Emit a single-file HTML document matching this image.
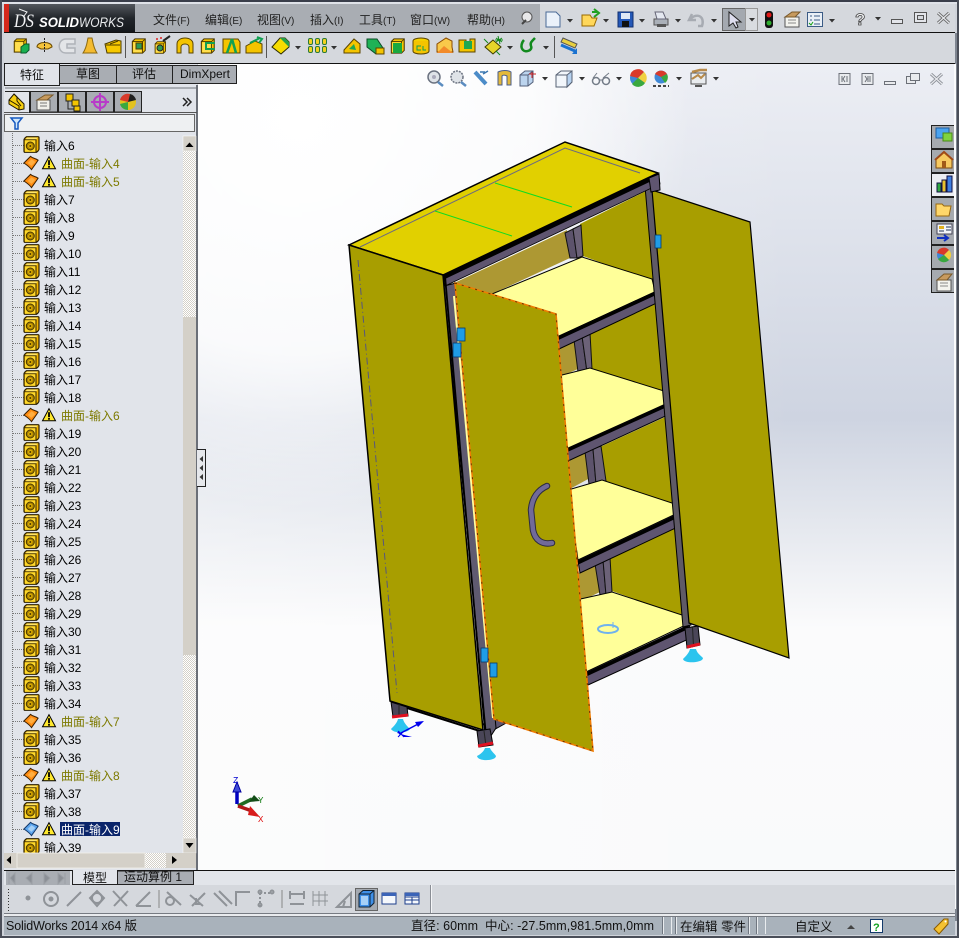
<!DOCTYPE html>
<html><head><meta charset="utf-8"><title>SolidWorks</title>
<style>
html,body{margin:0;padding:0;background:#cfd3da;width:959px;height:938px;overflow:hidden}
svg{display:block;position:absolute;left:0;top:0}
#vpbg{position:absolute;left:198px;top:64px;width:757px;height:806px;background:radial-gradient(circle 390px at 102px 56px,#fff 0,rgba(255,255,255,.8) 60%,rgba(255,255,255,0) 100%),linear-gradient(90deg,rgba(255,255,255,.38),rgba(255,255,255,0) 602px),linear-gradient(180deg,#eceef4 0,#dfe3ec 20%,#ced4e1 44%,#e6e9ef 58%,#fbfbfc 70%,#f9fafb 100%)}
text{font-family:"Liberation Sans","Noto Sans CJK SC",sans-serif}
.t{font-size:12px;fill:#000}
.s{font-size:12px;fill:#7d7a00}
.m{font-size:12px;fill:#222}
.st{font-size:12.5px;fill:#111}
</style></head><body>
<div id="vpbg"></div>
<svg width="959" height="938" viewBox="0 0 959 938" xmlns="http://www.w3.org/2000/svg">
<defs>
<linearGradient id="logo2" x1="0" y1="0" x2="0" y2="1"><stop offset="0" stop-color="#53575d"/><stop offset=".5" stop-color="#22262b"/><stop offset="1" stop-color="#14171b"/></linearGradient>
<pattern id="chk" width="2" height="2" patternUnits="userSpaceOnUse"><rect width="2" height="2" fill="#fff"/><rect width="1" height="1" fill="#d4d0c8"/><rect x="1" y="1" width="1" height="1" fill="#d4d0c8"/></pattern>
<symbol id="imp" viewBox="0 0 17 17" overflow="visible">
<path d="M1 4 Q1 3 2 2 L3.500 .7 H15 Q16 .7 16 1.700 V13 Q16 14 15 15 L13.500 16.300 H2 Q1 16.300 1 15.300Z" fill="#f2b400" stroke="#2b2000" stroke-width="1.200"/>
<path d="M1.500 3.700 H13 V16" fill="none" stroke="#2b2000"/>
<rect x="2" y="4.300" width="10.500" height="11.500" fill="#ffd82a"/>
<path d="M4 1.500 H15 L13.300 3.200 H2.500Z" fill="#ffe56a"/>
<circle cx="7.300" cy="10" r="4" fill="#a88000" stroke="#4a3800"/>
<circle cx="7.300" cy="10" r="2.200" fill="#e0b000"/>
<circle cx="7.300" cy="10" r="1" fill="#4a3800"/>
</symbol>
<symbol id="surf" viewBox="0 0 18 16" overflow="visible">
<path d="M1 8 L8 1 C10 3 13 3 16 5 L14 8 L9 15 C7 12 4 10 1 8Z" fill="#ff8c10" stroke="#3b2000" stroke-width="1.100"/><path d="M5 8 L9 4 C11 5 12 6 13 7 L9 11Z" fill="#ffae40"/>
</symbol>
<symbol id="surfb" viewBox="0 0 18 16" overflow="visible">
<path d="M1 8 L8 1 C10 3 13 3 16 5 L14 8 L9 15 C7 12 4 10 1 8Z" fill="#5ea6ee" stroke="#14396a" stroke-width="1.100"/><path d="M5 8 L9 4 C11 5 12 6 13 7 L9 11Z" fill="#a5d0f7"/>
</symbol>
<symbol id="warn" viewBox="0 0 14 14" overflow="visible">
<path d="M7 .7 L13.500 12.800 H.5Z" fill="#ffe92e" stroke="#000"/><rect x="6.100" y="4.200" width="1.800" height="5" fill="#000"/><rect x="6.100" y="10" width="1.800" height="1.700" fill="#000"/>
</symbol>
<symbol id="box" viewBox="0 0 18 18" overflow="visible">
<path d="M1.500 4 L4.500 1 H16 V14 L13 17 H1.500Z" fill="#f7c600" stroke="#4d3a00" stroke-width="1.200"/><path d="M1.500 4 H13 V17 M13 4 L16 1" fill="none" stroke="#4d3a00"/><rect x="2.500" y="5" width="9.500" height="11" fill="#ffdf50"/>
</symbol>
<symbol id="arr" viewBox="0 0 6 4" overflow="visible"><path d="M0 0 H6 L3 3.500Z" fill="#333"/></symbol>
<symbol id="tab" viewBox="0 0 24 24" overflow="visible"><path d="M24 .5 H.5 V23.500 H24" fill="#a6aaaf" stroke="#222"/></symbol>
</defs>

<!-- window frame -->
<rect x="0" y="0" width="959" height="2" fill="#3a3e4a"/>
<rect x="0" y="0" width="2" height="938" fill="#4a4e58"/>
<rect x="957" y="0" width="2" height="938" fill="#4a4e58"/>
<rect x="0" y="936" width="959" height="2" fill="#4a4e58"/>
<rect x="2" y="2" width="955" height="2" fill="#dfe2e8"/>

<!-- title row -->
<rect x="4" y="4" width="536" height="28" fill="#a9adb3"/>
<rect x="540" y="4" width="415" height="28" fill="#d5d8dd"/>
<rect x="4" y="4" width="5" height="28" fill="#d5281c"/>
<rect x="9" y="4" width="126" height="28" fill="url(#logo2)"/>
<text x="14" y="27" style="font-family:'Liberation Serif',serif;font-style:italic;font-size:19px" fill="#f2f3f5" textLength="20" lengthAdjust="spacingAndGlyphs">DS</text>
<path d="M19 9 L27 12 L24 16" fill="none" stroke="#f2f3f5" stroke-width="1"/>
<text x="39" y="27" style="font-size:14px;font-weight:bold;font-style:italic" fill="#fff" textLength="40" lengthAdjust="spacingAndGlyphs">SOLID</text>
<text x="79" y="27" style="font-size:14px;font-style:italic" fill="#e8eaec" textLength="45" lengthAdjust="spacingAndGlyphs">WORKS</text>
<rect x="4" y="32" width="951" height="1" fill="#111"/>

<text class="m" x="153" y="24">文件<tspan font-size="10">(F)</tspan></text>
<text class="m" x="205" y="24">编辑<tspan font-size="10">(E)</tspan></text>
<text class="m" x="257" y="24">视图<tspan font-size="10">(V)</tspan></text>
<text class="m" x="310" y="24">插入<tspan font-size="10">(I)</tspan></text>
<text class="m" x="359" y="24">工具<tspan font-size="10">(T)</tspan></text>
<text class="m" x="410" y="24">窗口<tspan font-size="10">(W)</tspan></text>
<text class="m" x="467" y="24">帮助<tspan font-size="10">(H)</tspan></text>
<circle cx="527" cy="17" r="5" fill="#e8e8ea" stroke="#555"/><path d="M522 24 L526 20" stroke="#444" stroke-width="2"/>

<!-- top standard icons -->
<path d="M546 12 H556 L560 16 V27 H546Z" fill="#eaf1fa" stroke="#4a6a96"/>
<use href="#arr" x="567" y="19" width="6" height="4"/>
<path d="M582 15 H590 L592 18 H597 L594 26 H582Z" fill="#ffd75a" stroke="#9a6a00"/><path d="M592 12 H597 M594 9 L599 13 L594 17" fill="none" stroke="#20a020" stroke-width="2"/>
<use href="#arr" x="603" y="19" width="6" height="4"/>
<rect x="618" y="12" width="15" height="15" fill="#2458b8" stroke="#122f70"/><rect x="621" y="13" width="9" height="6" fill="#dfe8f5"/><rect x="622" y="21" width="7" height="6" fill="#111"/>
<use href="#arr" x="639" y="19" width="6" height="4"/>
<path d="M654 19 H668 V25 H654Z" fill="#aab0b8" stroke="#555"/><path d="M657 19 L655 12 H663 L666 19Z" fill="#e4e8f0" stroke="#667"/><rect x="657" y="24" width="9" height="3" fill="#555"/>
<use href="#arr" x="675" y="19" width="6" height="4"/>
<path d="M692 14 L689 20 L696 20 M690 19 C698 12 705 17 702 26 L698 26" fill="none" stroke="#a7abb2" stroke-width="2.500"/>
<use href="#arr" x="711" y="19" width="6" height="4"/>
<rect x="722.500" y="8.500" width="23" height="22" fill="#a4a9b0" stroke="#666"/>
<rect x="745.500" y="8.500" width="12" height="22" fill="#d9dce0" stroke="#999"/>
<path d="M729 12 L729 26 L733 23 L736 28 L738 27 L736 22 L741 22Z" fill="#dde" stroke="#222"/>
<use href="#arr" x="749" y="18" width="6" height="4"/>
<rect x="765" y="11" width="8" height="17" rx="3" fill="#111"/><circle cx="769" cy="15" r="2.500" fill="#e21818"/><circle cx="769" cy="23" r="2.500" fill="#2fae2f"/>
<path d="M785 17 H799 V27 H785Z" fill="#f3f3ee" stroke="#555"/><path d="M785 17 L792 12 H800 L795 17Z" fill="#c79a5e" stroke="#7a5a2b"/><path d="M788 20 H796 M788 23 H796" stroke="#888"/>
<rect x="807.500" y="12.500" width="15" height="14" fill="#e9eff6" stroke="#3b5b85"/><path d="M810 16 H812 M814 16 H820 M814 20 H820 M814 24 H820 M810 20 H812" stroke="#3b5b85"/><path d="M809 23 L811 25 L813 22" stroke="#11a011" fill="none"/>
<use href="#arr" x="829" y="19" width="6" height="4"/>
<text x="855" y="25" style="font-size:17px;font-weight:bold" fill="#f2f3f5" stroke="#444" stroke-width=".8">?</text>
<use href="#arr" x="875" y="17" width="6" height="4"/>
<rect x="891.500" y="19.500" width="11" height="4" fill="#e3e5ea" stroke="#555"/>
<rect x="914.500" y="12.500" width="12" height="10" fill="#e3e5ea" stroke="#555"/><rect x="917.500" y="15.500" width="6" height="4" fill="#d5d8dd" stroke="#555"/>
<path d="M938 13 L949 23 M949 13 L938 23" stroke="#666" stroke-width="3"/><path d="M938 13 L949 23 M949 13 L938 23" stroke="#e4e6ea" stroke-width="1.200"/>

<!-- toolbar row -->
<rect x="4" y="33" width="951" height="30" fill="#d5d8dd"/>
<rect x="4" y="63" width="951" height="1" fill="#111"/>
<use href="#box" x="13" y="38" width="15" height="15"/><path d="M21 47 L25 44 H29 V50 L26 53 H21Z" fill="#18b050" stroke="#0b5a2c"/>
<path d="M37 47 C37 41 52 41 52 47 L48 49 H41Z" fill="#f4c33c" stroke="#6a4a00"/><path d="M44.500 38 V53" stroke="#222" stroke-dasharray="2 1"/>
<path d="M75 39 H66 C57 39 57 53 66 53 H75 V48 H67 V44 H75Z" fill="#e3e5e8" stroke="#aeb2b8" stroke-width="1.500"/>
<path d="M83 53 C87 47 87 42 88 38 H92 C93 42 93 47 97 53Z" fill="#f4bb30" stroke="#8d6a10"/>
<path d="M105 44 L116 40 L121 41 V53 H107Z" fill="#f6c800" stroke="#4d3c00"/><path d="M106 45 H120 M110 44 L118 41" stroke="#4d3c00"/>
<rect x="125" y="36" width="1" height="22" fill="#555"/>
<use href="#box" x="131" y="38" width="16" height="16"/><rect x="136" y="43" width="6" height="6" fill="#2c9a55" stroke="#4d3c00"/>
<use href="#box" x="154" y="41" width="13" height="13"/><circle cx="160" cy="48" r="3" fill="#2c9a55" stroke="#222"/><path d="M163 41 L170 36" stroke="#222" stroke-width="2"/><circle cx="157" cy="39" r="1" fill="#d22"/><circle cx="161" cy="38" r="1" fill="#d22"/>
<path d="M177 53 V44 C177 36 193 36 193 44 V53 H189 V47 C189 43 181 43 181 47 V53Z" fill="#f4c400" stroke="#5a4500"/>
<use href="#box" x="200" y="38" width="16" height="16"/><path d="M215 43 H206 V49 H215" fill="none" stroke="#11a051" stroke-width="2"/>
<path d="M223 39 H238 L240 42 V53 H223Z" fill="#f4c400" stroke="#5a4500"/><path d="M232 39 L227 53 M232 39 L236 53" stroke="#11a051" stroke-width="2.500"/>
<path d="M246 46 L255 41 L262 44 V53 H246Z" fill="#f4c400" stroke="#5a4500"/><path d="M250 43 L260 38 M257 37 L262 39 L259 43" fill="none" stroke="#11a051" stroke-width="2"/>
<rect x="266" y="36" width="1" height="22" fill="#555"/>
<path d="M272 47 L280 38 H285 L289 42 V47 L281 54Z" fill="#f5dc00" stroke="#2a2a00"/><path d="M280 38 L289 47 V42 L285 38Z" fill="#27a049"/>
<use href="#arr" x="295" y="46" width="6" height="4"/>
<g fill="#f3d21e" stroke="#2b7a36"><rect x="308.500" y="38.500" width="4" height="6" rx="1.500"/><rect x="315.500" y="38.500" width="4" height="6" rx="1.500"/><rect x="322.500" y="38.500" width="4" height="6" rx="1.500"/><rect x="308.500" y="46.500" width="4" height="6" rx="1.500"/><rect x="315.500" y="46.500" width="4" height="6" rx="1.500"/><rect x="322.500" y="46.500" width="4" height="6" rx="1.500"/></g>
<use href="#arr" x="331" y="46" width="6" height="4"/>
<path d="M344 50 L354 39 L360 44 V53 H344Z" fill="#f4c400" stroke="#5a4500"/><path d="M349 49 L354 44 L356 50Z" fill="#1fa851"/>
<path d="M367 39 H377 L383 48 V54 H376 L367 47Z" fill="#1fb256" stroke="#0c4d26"/><rect x="376" y="48" width="8" height="6" fill="#f4c400" stroke="#5a4500"/>
<use href="#box" x="390" y="38" width="16" height="16"/><rect x="393" y="43" width="9" height="10" fill="#19a83f"/>
<ellipse cx="421" cy="41" rx="8" ry="3" fill="#f4d000" stroke="#5a4500"/><path d="M413 41 V51 C413 55 429 55 429 51 V41" fill="#f4c400" stroke="#5a4500"/><path d="M421 46 H417 V50 H421 M423 46 V50 H426" stroke="#11a051" fill="none"/>
<path d="M437 44 L446 38 L452 41 V47 L453 52 H437Z" fill="#f9c94a" stroke="#8a4a00"/><path d="M437 53 L444 46 L453 53Z" fill="#f28a2a"/>
<path d="M459 52 V40 H466 V46 H470 V39 H475 V52Z" fill="#f4c400" stroke="#5a4500"/><rect x="464" y="41" width="8" height="8" fill="#1fa851"/>
<path d="M485 47 L493 40 L501 47 L493 54Z" fill="#e5d42a" stroke="#3b3b00"/><path d="M498 36 L500 44 M495 40 H503 M496 38 L502 42 M502 38 L496 42 M484 39 L488 43 M496 51 L500 55" stroke="#11881a"/>
<use href="#arr" x="507" y="46" width="6" height="4"/>
<path d="M535 38 C531 42 530 43 531 46 C533 50 526 53 523 50 C520 47 522 42 524 40" fill="none" stroke="#128a1e" stroke-width="2.500"/>
<use href="#arr" x="543" y="46" width="6" height="4"/>
<rect x="554" y="36" width="1" height="22" fill="#555"/>
<path d="M563 38 L577 44 L575 48 L561 42Z" fill="#e8d040" stroke="#555"/><path d="M561 45 L575 51" stroke="#1a72d0" stroke-width="3"/><path d="M572 54 L577 48 V54Z" fill="#1a72d0"/>

<!-- view toolbar -->
<g fill="none">
<circle cx="434" cy="77" r="6" fill="#dfe3e8" stroke="#6b7280" stroke-width="1.500"/><circle cx="434" cy="77" r="2" fill="#aab"/><path d="M438 82 L443 86" stroke="#5b8cc0" stroke-width="2.500"/>
<circle cx="457" cy="77" r="6" fill="#dfe3e8" stroke="#6b7280" stroke-width="1.500" stroke-dasharray="2 1"/><path d="M461 82 L466 86" stroke="#5b8cc0" stroke-width="2.500"/>
<path d="M475 72 L486 84" stroke="#4c8cc8" stroke-width="4"/><path d="M483 74 L488 71 M485 72 H480" stroke="#3a76b0" stroke-width="1.500"/>
<path d="M498 72 C502 70 508 70 511 72 V85 L507 85 V76 C505 75 503 75 502 76 V85 H498Z" fill="#e4b93a" stroke="#4a5d8a"/>
<path d="M520 75 L525 71 H533 V82 L528 86 H520Z" fill="#bcd4ee" stroke="#54607a"/><path d="M520 75 H528 V86 M528 75 L533 71" stroke="#54607a"/><path d="M529 74 H536 M532 78 V72" stroke="#c22"/>
<path d="M556 75 L561 71 H572 V82 L567 87 H556Z" fill="#f2f6fb" stroke="#586274"/><path d="M567 75 V87 M567 75 L572 71 V82 L567 87Z" fill="#b7d2f0" stroke="#586274"/><path d="M556 75 H567" stroke="#586274"/>
<circle cx="596" cy="81" r="3.500" stroke="#737b87" stroke-width="1.500"/><circle cx="606" cy="81" r="3.500" stroke="#737b87" stroke-width="1.500"/><path d="M599 80 H603 M593 78 L597 73 M603 78 L609 73" stroke="#737b87"/>
</g>
<use href="#arr" x="542" y="77" width="6" height="4"/>
<use href="#arr" x="579" y="77" width="6" height="4"/>
<use href="#arr" x="616" y="77" width="6" height="4"/>
<circle cx="638" cy="78" r="8" fill="#3f88d6"/><path d="M638 78 L630 76 A8 8 0 0 1 644 72Z" fill="#d83a2a"/><path d="M638 78 L644 72 A8 8 0 0 1 645 83Z" fill="#f0d040"/><path d="M638 78 L645 83 A8 8 0 0 1 632 84Z" fill="#39a83f"/>
<circle cx="661" cy="77" r="6.500" fill="#3f88d6"/><path d="M661 77 L655 74 A7 7 0 0 1 667 74Z" fill="#d83a2a"/><path d="M661 77 L667 74 A7 7 0 0 1 665 83Z" fill="#39a83f"/><path d="M653 86 H669" stroke="#444" stroke-width="2" stroke-dasharray="3 2"/>
<use href="#arr" x="676" y="77" width="6" height="4"/>
<rect x="691" y="73" width="15" height="11" fill="#e9ecef" stroke="#555"/><path d="M692 79 L698 75 L701 78 L705 74" stroke="#b78a4a" stroke-width="2" fill="none"/><path d="M692 72 L700 70 H707" stroke="#b78a4a" stroke-width="2.500"/><path d="M695 86 H702" stroke="#555" stroke-width="2"/>
<use href="#arr" x="713" y="77" width="6" height="4"/>
<g fill="none" stroke="#6c7078"><rect x="839" y="73.500" width="11" height="11" fill="#e9ebee"/><path d="M842 76 V82 M845 76 L843 79 L845 82 M847 76 V82"/><rect x="862" y="73.500" width="11" height="11" fill="#e9ebee"/><path d="M868 76 V82 M865 76 L867 79 L865 82 M870 76 V82"/><rect x="884.500" y="81.500" width="11" height="3" fill="#e9ebee"/><rect x="906.500" y="76.500" width="9" height="7" fill="#e9ebee"/><rect x="910.500" y="73.500" width="9" height="7" fill="#e9ebee"/></g>
<path d="M931 74 L942 84 M942 74 L931 84" stroke="#8a8e96" stroke-width="3"/><path d="M931 74 L942 84 M942 74 L931 84" stroke="#e6e8ec" stroke-width="1.200"/>

<!-- CABINET -->
<!-- back walls -->
<polygon points="450,285 567,230 570,258 492,294 470,295" fill="#ad9833"/>
<polygon points="580,224 652,188 657,283 583,256" fill="#a89e00"/>
<polygon points="555,350 577,339 580,368 558,378" fill="#ad9833"/>
<polygon points="590,334 664,300 669,393 592,369" fill="#a89e00"/>
<polygon points="565,463 588,452 590,478 568,490" fill="#ad9833"/>
<polygon points="600,447 676,412 681,506 605,481" fill="#a89e00"/>
<polygon points="577,574 596,563 600,592 579,602" fill="#ad9833"/>
<polygon points="610,558 684,524 691,620 612,591" fill="#a89e00"/>
<!-- back posts -->
<g stroke="#111" stroke-width="1"><polygon points="565,233 573,229 577,258 570,258" fill="#5d536c"/><polygon points="573,229 581,225 583,256 577,258" fill="#6c6278"/>
<polygon points="574,340 582,336 587,372 578,372" fill="#5d536c"/><polygon points="582,336 590,333 592,369 587,372" fill="#6c6278"/>
<polygon points="585,452 593,449 596,484 589,484" fill="#5d536c"/><polygon points="593,449 601,446 606,481 596,484" fill="#6c6278"/>
<polygon points="595,564 603,560 606,595 600,595" fill="#5d536c"/><polygon points="603,560 610,557 612,592 606,595" fill="#6c6278"/></g>
<!-- shelves -->
<polygon points="492,294 582,257 652,279 654,287 659,290 557,337 520,330" fill="#ffff99" stroke="#000" stroke-width="1"/>
<polygon points="550,378 590,368 664,391 666,399 671,402 566,450" fill="#ffff99" stroke="#000" stroke-width="1"/>
<polygon points="568,490 602,480 675,504 676,510 680,512 578,560" fill="#ffff99" stroke="#000" stroke-width="1"/>
<polygon points="576,600 612,592 685,616 686,621 690,623 586,672" fill="#ffff99" stroke="#000" stroke-width="1"/>
<!-- shelf beams -->
<polygon points="557,337 659,290 661,301 559,349" fill="#5f5570" stroke="#000"/><path d="M557,339 L659,292" stroke="#000" stroke-width="3"/>
<polygon points="566,449 670,402 672,413 568,461" fill="#5f5570" stroke="#000"/><path d="M566,451 L670,404" stroke="#000" stroke-width="3"/>
<polygon points="578,561 680,513 682,525 580,573" fill="#5f5570" stroke="#000"/><path d="M578,563 L680,515" stroke="#000" stroke-width="3"/>
<polygon points="586,673 689,625 693,637 588,685" fill="#5f5570" stroke="#000"/><path d="M586,675 L689,627" stroke="#000" stroke-width="3"/>
<!-- right front post -->
<polygon points="645,186 654,183 691,625 683,627" fill="#5f5a66" stroke="#000"/>
<!-- right foot -->
<polygon points="685,628 698,626 700,645 687,648" fill="#4a4658" stroke="#000"/>
<path d="M692.500 627 L693.500 646" stroke="#222"/>
<path d="M687,647 L700,644" stroke="#e01020" stroke-width="3"/>
<path d="M683,659 C686,656 689,653 690,649 H696 C697,653 700,655 703,658 C703,663 684,664 683,659Z" fill="#2cc4ee"/>
<!-- right door -->
<polygon points="652,190 750,222 789,658 689,623" fill="#a89e00" stroke="#000" stroke-width="1.200"/>
<!-- top face -->
<polygon points="349,245 565,142 658,173 443,275" fill="#e1d000" stroke="#000" stroke-width="1.500"/>
<polyline points="360,247 565,148 640,173" fill="none" stroke="#6b6a80" stroke-width="1"/>
<path d="M495,183 L572,207 M435,211 L512,236" stroke="#10dc20" stroke-width="1"/>
<!-- front top beam -->
<polygon points="443,275 658,173 660,183 445,285" fill="#000"/>
<polygon points="444,279 659,177 660,184 445,286" fill="#5f5570" stroke="#000" stroke-width=".8"/>
<polygon points="649,178 659,174 660,190 651,192" fill="#5f5570" stroke="#000"/>
<!-- bottom frame behind door -->
<polygon points="483,724 508,714 508,722 490,732" fill="#5f5570" stroke="#000"/>
<!-- left front post -->
<polygon points="444,286 456,283 496,728 487,742" fill="#5f5a70" stroke="#000"/>
<path d="M454,296 L493,718" stroke="#ffffa0" stroke-width="2"/>
<!-- left panel -->
<polygon points="349,245 443,275 483,730 390,701" fill="#a89e00" stroke="#000" stroke-width="1.500"/>
<path d="M445,276 L485,731" stroke="#000" stroke-width="1.800"/>
<path d="M358,260 L397,693" fill="none" stroke="#56567e" stroke-width="1" stroke-dasharray="7 3 1 3"/>
<!-- bottom panel edge -->
<path d="M407,708 L483,732" stroke="#000" stroke-width="2"/>
<!-- left foot -->
<polygon points="391,702 407,707 408,716 393,717" fill="#4a4658" stroke="#000"/>
<path d="M399 704 V716" stroke="#222"/>
<path d="M392,717 L408,715" stroke="#e01020" stroke-width="3"/>
<path d="M391,729 C394,726 397,723 398,719 H403 C404,723 407,726 410,729 C408,733 394,734 391,729Z" fill="#2cc4ee"/>
<path d="M399,734 L422,722" stroke="#0000ee" stroke-width="1.500"/><path d="M424,721 L415,722 L418,727Z M397,733 L412,737 L404,737 L399,731Z" fill="#0000ee"/><path d="M398,731 L404,737 M404,731 L398,737" stroke="#0000ee"/>
<!-- center foot -->
<polygon points="477,731 490,729 493,745 479,747" fill="#4a4658" stroke="#000"/>
<path d="M484 731 L486 746" stroke="#222"/>
<path d="M478,746 L493,743" stroke="#e01020" stroke-width="3"/>
<path d="M477,756 C481,754 484,751 485,748 H490 C491,751 494,753 496,756 C496,761 478,762 477,756Z" fill="#2cc4ee"/>
<!-- front door -->
<polygon points="455,283 556,314 593,751 494,719" fill="#a89e00"/>
<polygon points="455,283 556,314 593,751 494,719" fill="none" stroke="#f07c00" stroke-width="1.600"/>
<polygon points="455,283 556,314 593,751 494,719" fill="none" stroke="#6a3400" stroke-width="1" stroke-dasharray="2 5"/>
<!-- hinges -->
<g fill="#1f9ce6" stroke="#073a6a" stroke-width=".8">
<rect x="457" y="328" width="8" height="13"/><rect x="453" y="343" width="8" height="14"/>
<rect x="481" y="648" width="7" height="14"/><rect x="490" y="663" width="7" height="14"/>
<rect x="655" y="235" width="6" height="13"/>
</g>
<!-- handle -->
<path d="M547,486 C538,490 532,498 531,510 L533,530 C535,540 542,545 552,543" fill="none" stroke="#2c2a3e" stroke-width="6.500" stroke-linecap="round"/>
<path d="M547,486 C538,490 532,498 531,510 L533,530 C535,540 542,545 552,543" fill="none" stroke="#716a98" stroke-width="4.500" stroke-linecap="round"/>
<!-- rotate glyph -->
<ellipse cx="608" cy="629" rx="10" ry="4" fill="none" stroke="#6fb2ee" stroke-width="2"/><path d="M613 622 V628" stroke="#6fb2ee"/>

<!-- triad -->
<path d="M237,785 V804" stroke="#0000c0" stroke-width="3.500"/><path d="M233,792 L237,782 L241,792Z" fill="#3e4ad8" stroke="#0000a0"/>
<path d="M238,806 L252,799" stroke="#1f6b22" stroke-width="3.500"/><path d="M249,802 L260,801 L254,795Z" fill="#144d18"/>
<path d="M238,806 L252,811" stroke="#b01818" stroke-width="3.500"/><path d="M250,806 L260,817 L248,815Z" fill="#d81c1c"/>
<text x="233" y="783" style="font-size:9px;font-family:'Liberation Mono',monospace" fill="#0000d0">Z</text>
<text x="258" y="803" style="font-size:9px;font-family:'Liberation Mono',monospace" fill="#0f7a0f">Y</text>
<text x="258" y="822" style="font-size:9px;font-family:'Liberation Mono',monospace" fill="#e01010">X</text>

<!-- right task pane -->
<use href="#tab" x="931" y="125" width="24" height="24"/><use href="#tab" x="931" y="149" width="24" height="24"/>
<path d="M955 173.500 H931.500 V196.500 H955" fill="#eceef2" stroke="#222"/>
<use href="#tab" x="931" y="197" width="24" height="24"/><use href="#tab" x="931" y="221" width="24" height="24"/><use href="#tab" x="931" y="245" width="24" height="24"/><use href="#tab" x="931" y="269" width="24" height="24"/>
<rect x="936" y="128" width="13" height="10" fill="#4aa3ef" stroke="#1e5ea0"/><rect x="943" y="133" width="9" height="8" fill="#7fd23f" stroke="#4a8a1a"/>
<path d="M936 159 L944 152 L952 159 V168 H936Z" fill="#f6c960" stroke="#7a4a10"/><path d="M935 160 L944 152 L953 160" fill="none" stroke="#a04a18" stroke-width="2"/><rect x="942" y="161" width="4" height="7" fill="#a05a18"/>
<rect x="937" y="183" width="4" height="9" fill="#2fa83f" stroke="#114"/><rect x="942" y="180" width="4" height="12" fill="#e9c22e" stroke="#114"/><rect x="947" y="176" width="5" height="16" fill="#3f7fe0" stroke="#114"/>
<path d="M936 204 H942 L944 206 H951 L949 216 H936Z" fill="#ffd76a" stroke="#9a6a10"/>
<rect x="937" y="224" width="15" height="10" fill="#f3f5f8" stroke="#445"/><rect x="939" y="226" width="5" height="3" fill="#e0b020"/><path d="M946 227 H951 M946 230 H951 M939 231 H944" stroke="#235"/><path d="M937 238 H947 M944 235 L948 238 L944 241" fill="none" stroke="#1030c0" stroke-width="2"/>
<circle cx="944" cy="255" r="7" fill="#3f88d6"/><path d="M944 255 L937 253 A7 7 0 0 1 949 250Z" fill="#d83a2a"/><path d="M944 255 L949 250 A7 7 0 0 1 949 260Z" fill="#f0d040"/><path d="M944 255 L949 260 A7 7 0 0 1 938 259Z" fill="#39a83f"/>
<path d="M937 280 H951 V291 H937Z" fill="#f3f3ee" stroke="#555"/><path d="M937 280 L944 274 H952 L947 280Z" fill="#c79a5e" stroke="#7a5a2b"/><path d="M940 283 H948 M940 286 H948" stroke="#888"/>
<rect x="955" y="33" width="2" height="888" fill="#7e8590"/>
<rect x="954" y="64" width="2" height="845" fill="#fafbfc"/>

<!-- left panel -->
<rect x="4" y="64" width="193" height="806" fill="#e1e4ea"/>
<rect x="196" y="85" width="2" height="785" fill="#6b6f77"/>
<!-- feature tabs -->
<path d="M59.500 65.500 H116.500 V83.500 H59.500Z M116.500 65.500 H172.500 V83.500 H116.500Z M172.500 65.500 H236.500 V83.500 H172.500Z" fill="#a9adb3" stroke="#222"/>
<path d="M4.500 64 V85.500 H59.500 V64" fill="#e1e4ea" stroke="#222"/>
<rect x="5" y="87" width="191" height="2" fill="#a9adb3"/>
<text x="20" y="79" style="font-size:12px" fill="#111">特征</text>
<text x="76" y="78" style="font-size:12px" fill="#111">草图</text>
<text x="132" y="78" style="font-size:12px" fill="#111">评估</text>
<text x="180" y="78" style="font-size:12px" fill="#111">DimXpert</text>

<!-- pane icons -->
<rect x="4" y="112" width="193" height="1" fill="#555"/>
<path d="M30.500 112 V91.500 H57.500 V112 Z M58.500 112 V91.500 H85.500 V112Z M86.500 112 V91.500 H113.500 V112Z M114.500 112 V91.500 H141.500 V112Z" fill="#a9adb3" stroke="#222"/>
<path d="M5 91.500 H29.500 V113" fill="#e1e4ea" stroke="#222"/>
<path d="M9 100 L14 94 L24 104 V109 L19 110 L9 104Z" fill="#f6cf10" stroke="#201800"/><path d="M14 94 L17 97 V101 L21 106 M9 100 L19 106 V110" fill="none" stroke="#201800"/>
<path d="M37 100 H50 V110 H37Z" fill="#f0f0ea" stroke="#555"/><path d="M37 100 L45 95 H53 L47 100Z" fill="#c79a5e" stroke="#7a5a2b"/><path d="M40 103 H47 M40 106 H47" stroke="#777"/>
<path d="M68 97 V109 H74" fill="none" stroke="#222"/><rect x="66" y="94" width="7" height="7" fill="#f4c400" stroke="#222"/><rect x="72" y="100" width="7" height="6" fill="#f4c400" stroke="#222"/><rect x="74" y="106" width="6" height="5" fill="#f4c400" stroke="#222"/>
<circle cx="100" cy="102" r="6" fill="none" stroke="#b83cc8" stroke-width="2"/><path d="M100 93 V111 M91 102 H109" stroke="#b83cc8" stroke-width="2"/>
<circle cx="128" cy="102" r="8" fill="#e2c21f"/><path d="M128 102 L120 100 A8 8 0 0 1 130 94Z" fill="#d83a2a"/><path d="M128 102 L130 94 A8 8 0 0 1 136 100Z" fill="#202020"/><path d="M128 102 L120 104 A8 8 0 0 0 128 110Z" fill="#39a83f"/>
<path d="M183 98 L187 102 L183 106 M187 98 L191 102 L187 106" fill="none" stroke="#222" stroke-width="1.500"/>
<!-- filter -->
<rect x="4.500" y="114.500" width="190" height="17" fill="#eef0f2" stroke="#666"/>
<path d="M11 118 H22 L18 123 V129 H15 V123Z" fill="#cfe6fb" stroke="#1558c0" stroke-width="1.500"/>

<!-- tree dotted -->
<path d="M12.500 133 V870" stroke="#777" stroke-dasharray="1 1"/>
<g stroke="#777" stroke-dasharray="1 1">
<path d="M13 145.500 H24"/><path d="M13 163.500 H24"/><path d="M13 181.500 H24"/><path d="M13 199.500 H24"/><path d="M13 217.500 H24"/><path d="M13 235.500 H24"/><path d="M13 253.500 H24"/><path d="M13 271.500 H24"/><path d="M13 289.500 H24"/><path d="M13 307.500 H24"/><path d="M13 325.500 H24"/><path d="M13 343.500 H24"/><path d="M13 361.500 H24"/><path d="M13 379.500 H24"/><path d="M13 397.500 H24"/><path d="M13 415.500 H24"/><path d="M13 433.500 H24"/><path d="M13 451.500 H24"/><path d="M13 469.500 H24"/><path d="M13 487.500 H24"/><path d="M13 505.500 H24"/><path d="M13 523.500 H24"/><path d="M13 541.500 H24"/><path d="M13 559.500 H24"/><path d="M13 577.500 H24"/><path d="M13 595.500 H24"/><path d="M13 613.500 H24"/><path d="M13 631.500 H24"/><path d="M13 649.500 H24"/><path d="M13 667.500 H24"/><path d="M13 685.500 H24"/><path d="M13 703.500 H24"/><path d="M13 721.500 H24"/><path d="M13 739.500 H24"/><path d="M13 757.500 H24"/><path d="M13 775.500 H24"/><path d="M13 793.500 H24"/><path d="M13 811.500 H24"/><path d="M13 829.500 H24"/>
</g>
<!-- tree rows -->
<use href="#imp" x="23" y="136" width="17" height="17"/><text class="t" x="44" y="150">输入6</text>
<use href="#surf" x="23" y="155" width="17" height="16"/><use href="#warn" x="42" y="156" width="14" height="14"/><text class="s" x="61" y="168">曲面-输入4</text>
<use href="#surf" x="23" y="173" width="17" height="16"/><use href="#warn" x="42" y="174" width="14" height="14"/><text class="s" x="61" y="186">曲面-输入5</text>
<use href="#imp" x="23" y="190" width="17" height="17"/><text class="t" x="44" y="204">输入7</text>
<use href="#imp" x="23" y="208" width="17" height="17"/><text class="t" x="44" y="222">输入8</text>
<use href="#imp" x="23" y="226" width="17" height="17"/><text class="t" x="44" y="240">输入9</text>
<use href="#imp" x="23" y="244" width="17" height="17"/><text class="t" x="44" y="258">输入10</text>
<use href="#imp" x="23" y="262" width="17" height="17"/><text class="t" x="44" y="276">输入11</text>
<use href="#imp" x="23" y="280" width="17" height="17"/><text class="t" x="44" y="294">输入12</text>
<use href="#imp" x="23" y="298" width="17" height="17"/><text class="t" x="44" y="312">输入13</text>
<use href="#imp" x="23" y="316" width="17" height="17"/><text class="t" x="44" y="330">输入14</text>
<use href="#imp" x="23" y="334" width="17" height="17"/><text class="t" x="44" y="348">输入15</text>
<use href="#imp" x="23" y="352" width="17" height="17"/><text class="t" x="44" y="366">输入16</text>
<use href="#imp" x="23" y="370" width="17" height="17"/><text class="t" x="44" y="384">输入17</text>
<use href="#imp" x="23" y="388" width="17" height="17"/><text class="t" x="44" y="402">输入18</text>
<use href="#surf" x="23" y="407" width="17" height="16"/><use href="#warn" x="42" y="408" width="14" height="14"/><text class="s" x="61" y="420">曲面-输入6</text>
<use href="#imp" x="23" y="424" width="17" height="17"/><text class="t" x="44" y="438">输入19</text>
<use href="#imp" x="23" y="442" width="17" height="17"/><text class="t" x="44" y="456">输入20</text>
<use href="#imp" x="23" y="460" width="17" height="17"/><text class="t" x="44" y="474">输入21</text>
<use href="#imp" x="23" y="478" width="17" height="17"/><text class="t" x="44" y="492">输入22</text>
<use href="#imp" x="23" y="496" width="17" height="17"/><text class="t" x="44" y="510">输入23</text>
<use href="#imp" x="23" y="514" width="17" height="17"/><text class="t" x="44" y="528">输入24</text>
<use href="#imp" x="23" y="532" width="17" height="17"/><text class="t" x="44" y="546">输入25</text>
<use href="#imp" x="23" y="550" width="17" height="17"/><text class="t" x="44" y="564">输入26</text>
<use href="#imp" x="23" y="568" width="17" height="17"/><text class="t" x="44" y="582">输入27</text>
<use href="#imp" x="23" y="586" width="17" height="17"/><text class="t" x="44" y="600">输入28</text>
<use href="#imp" x="23" y="604" width="17" height="17"/><text class="t" x="44" y="618">输入29</text>
<use href="#imp" x="23" y="622" width="17" height="17"/><text class="t" x="44" y="636">输入30</text>
<use href="#imp" x="23" y="640" width="17" height="17"/><text class="t" x="44" y="654">输入31</text>
<use href="#imp" x="23" y="658" width="17" height="17"/><text class="t" x="44" y="672">输入32</text>
<use href="#imp" x="23" y="676" width="17" height="17"/><text class="t" x="44" y="690">输入33</text>
<use href="#imp" x="23" y="694" width="17" height="17"/><text class="t" x="44" y="708">输入34</text>
<use href="#surf" x="23" y="713" width="17" height="16"/><use href="#warn" x="42" y="714" width="14" height="14"/><text class="s" x="61" y="726">曲面-输入7</text>
<use href="#imp" x="23" y="730" width="17" height="17"/><text class="t" x="44" y="744">输入35</text>
<use href="#imp" x="23" y="748" width="17" height="17"/><text class="t" x="44" y="762">输入36</text>
<use href="#surf" x="23" y="767" width="17" height="16"/><use href="#warn" x="42" y="768" width="14" height="14"/><text class="s" x="61" y="780">曲面-输入8</text>
<use href="#imp" x="23" y="784" width="17" height="17"/><text class="t" x="44" y="798">输入37</text>
<use href="#imp" x="23" y="802" width="17" height="17"/><text class="t" x="44" y="816">输入38</text>
<use href="#surfb" x="23" y="821" width="17" height="16"/><use href="#warn" x="42" y="822" width="14" height="14"/><rect x="60" y="822" width="60" height="14" fill="#0a246a"/><text x="61" y="834" style="font-size:12px" fill="#fff">曲面-输入9</text>
<use href="#imp" x="23" y="838" width="17" height="17"/><text class="t" x="44" y="852">输入39</text>
<rect x="4" y="853" width="180" height="17" fill="#e1e4ea"/>

<!-- scrollbars -->
<rect x="183" y="136" width="13" height="717" fill="url(#chk)"/>
<rect x="183" y="317" width="13" height="338" fill="#d4d0c8"/>
<rect x="183" y="136" width="13" height="15" fill="#d4d0c8" stroke="#fff" stroke-width=".5"/><path d="M185.500 147 H193.500 L189.500 142.500Z" fill="#000"/>
<rect x="183" y="838" width="13" height="15" fill="#d4d0c8" stroke="#fff" stroke-width=".5"/><path d="M185.500 843 H193.500 L189.500 848Z" fill="#000"/>
<rect x="4" y="853" width="177" height="15" fill="url(#chk)"/>
<rect x="4" y="853" width="13" height="15" fill="#d4d0c8"/><path d="M11 856 V864 L6.500 860Z" fill="#000"/>
<rect x="17" y="853" width="128" height="15" fill="#d4d0c8" stroke="#f3f1ec" stroke-width=".8"/>
<rect x="166" y="853" width="15" height="15" fill="#d4d0c8"/><path d="M172 856 V864 L177 860Z" fill="#000"/>
<rect x="181" y="853" width="15" height="15" fill="#d4d0c8"/>

<!-- splitter -->
<path d="M197 449.500 H205.500 V486.500 H197" fill="#e6e8ec" stroke="#222"/>
<path d="M203 456 V462 L199.500 459Z M203 465 V471 L199.500 468Z M203 474 V480 L199.500 477Z" fill="#333"/>

<!-- bottom tabs -->
<rect x="4" y="870" width="951" height="1" fill="#111"/>
<rect x="4" y="871" width="951" height="15" fill="#e2e5ea"/>
<rect x="6" y="871" width="64" height="14" fill="#a9adb3"/>
<g fill="#8c9097" stroke="#9ca0a6"><path d="M10 878 L15 873 V884Z M9 873 V884"/><path d="M32 873 V884 L26 878Z"/><path d="M44 873 V884 L50 878Z"/><path d="M58 873 V884 L64 878Z M65 873 V884"/></g>
<path d="M72.500 870 V884.500 H117.500 V870" fill="#e2e5ea" stroke="#222"/>
<path d="M117.500 871 H193.500 V884.500 H117.500Z" fill="#a9adb3" stroke="#222"/>
<text x="83" y="882" style="font-size:12px" fill="#111">模型</text>
<text x="124" y="881" style="font-size:12px" fill="#111">运动算例 1</text>

<!-- bottom toolbar -->
<rect x="4" y="885" width="951" height="28" fill="#d5d8dd"/>
<path d="M8.500 889 V911" stroke="#333" stroke-dasharray="1 2"/>
<g fill="none" stroke="#8f9398" stroke-width="2">
<circle cx="28" cy="898" r="1.500" fill="#8f9398"/>
<circle cx="51" cy="899" r="7"/><circle cx="51" cy="899" r="1.500" fill="#8f9398"/>
<path d="M67 906 L81 892"/>
<path d="M97 891 L104 898 L97 906 L90 898Z"/><circle cx="97" cy="898" r="5"/>
<path d="M113 891 L127 906 M128 891 L114 906"/>
<path d="M136 906 L150 892 M136 906 H151"/>
<circle cx="170" cy="901" r="4"/><path d="M167 892 L181 905"/>
<path d="M190 895 L203 906 M205 893 L192 906 M196 898 V904 H200"/>
<path d="M214 893 L227 906 M219 891 L232 904"/>
<path d="M236 906 V892 H250"/>
<path d="M260 893 H272 M260 893 V907" stroke-dasharray="2 2"/><circle cx="260" cy="892" r="1.500"/><circle cx="272" cy="892" r="1.500"/><circle cx="260" cy="905" r="1.500"/>
<path d="M290 891 V899 M304 891 V899 M290 894 H304 M290 904 H304"/>
<path d="M313 891 V906 M319 891 V906 M325 891 V906 M313 895 H328 M313 901 H328" stroke-width="1"/>
<path d="M337 907 L351 893 V907Z M343 907 L345 901"/>
</g>
<rect x="158.500" y="890" width="1" height="18" fill="#888"/>
<rect x="281.500" y="890" width="1" height="18" fill="#888"/>
<rect x="355.500" y="888.500" width="22" height="22" fill="#a4a9b0" stroke="#666"/>
<path d="M359 894 L363 890.500 H374 V903 L370 907 H359Z" fill="#3f90e8" stroke="#123"/><path d="M359 894 H370 V907 M370 894 L374 890.500" fill="none" stroke="#123"/><rect x="361" y="896" width="7" height="9" fill="#a6d0f7"/>
<rect x="382" y="893" width="14" height="11" fill="#f5f8fc" stroke="#1d3e8c"/><rect x="382" y="893" width="14" height="3" fill="#3b64b8"/>
<rect x="405" y="893" width="14" height="11" fill="#f5f8fc" stroke="#1d3e8c"/><path d="M405 897 H419 M412 897 V904 M405 900 H419" stroke="#1d3e8c"/><rect x="405" y="893" width="14" height="3" fill="#3b64b8"/>
<rect x="430" y="885" width="1" height="28" fill="#8a8e95"/>
<rect x="431" y="885" width="1" height="28" fill="#f5f6f8"/>
<rect x="4" y="913" width="951" height="1" fill="#777b82"/>
<rect x="4" y="914" width="951" height="2" fill="#e9ebee"/>
<rect x="4" y="916" width="951" height="1" fill="#777b82"/>

<!-- status bar -->
<rect x="4" y="917" width="951" height="18" fill="#a9b2bb"/>
<text class="st" x="6" y="930" textLength="131" lengthAdjust="spacing">SolidWorks 2014 x64 版</text>
<text class="st" x="411" y="930" textLength="67" lengthAdjust="spacing">直径: 60mm</text>
<text class="st" x="485" y="930" textLength="169" lengthAdjust="spacing">中心: -27.5mm,981.5mm,0mm</text>
<g fill="none" stroke="#e9ecef"><path d="M663.500 917 V934 M671.500 917 V934 M676.500 917 V934 M749.500 917 V934 M757.500 917 V934 M765.500 917 V934"/></g>
<g fill="none" stroke="#6f7680"><path d="M662.500 917 V934 M675.500 917 V934 M748.500 917 V934 M756.500 917 V934"/></g>
<text class="st" x="680" y="931">在编辑 零件</text>
<text class="st" x="795" y="931">自定义</text>
<path d="M847 929 L851 925 L855 929Z" fill="#444"/>
<rect x="870.500" y="919.500" width="12" height="13" fill="#fff" stroke="#143a6a"/><text x="873" y="931" style="font-size:11px;font-weight:bold" fill="#10a020">?</text>
<path d="M934 929 L944 919 L948 919 L948 924 L939 934 Z" fill="#f5c130" stroke="#8a5a00"/><circle cx="945.500" cy="921.500" r="1" fill="#fff"/>
</svg>
</body></html>
